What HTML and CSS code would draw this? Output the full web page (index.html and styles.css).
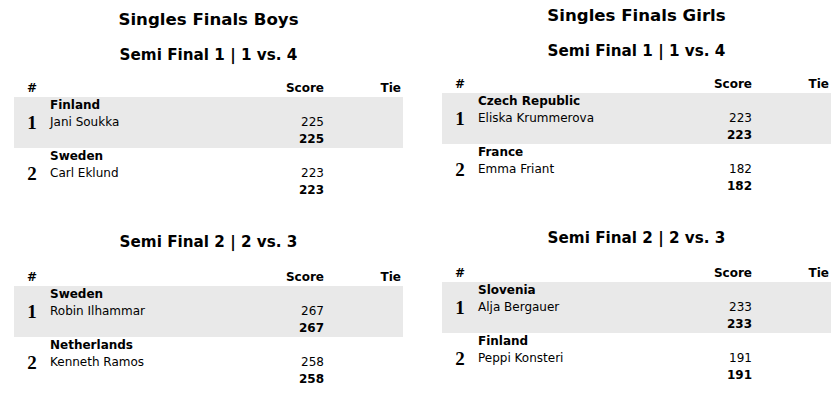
FILE: index.html
```html
<!DOCTYPE html>
<html>
<head>
<meta charset="utf-8">
<link rel="stylesheet" href="styles.css">
</head>
<body>
<div class="page">
  <section class="col col-left">
    <h2 class="title">Singles Finals Boys</h2>
    <h3 class="semi">Semi Final 1 | 1 vs. 4</h3>
    <table class="results">
      <colgroup><col class="c-rank"><col class="c-name"><col class="c-score"><col class="c-tie"></colgroup>
      <thead><tr><th class="rank">#</th><th></th><th class="score">Score</th><th class="tie">Tie</th></tr></thead>
      <tbody>
        <tr class="alt"><td class="rank">1</td><td class="name"><b>Finland</b><br>Jani Soukka<br>&nbsp;</td><td class="score">&nbsp;<br>225<br><b>225</b></td><td class="tie"></td></tr>
        <tr><td class="rank">2</td><td class="name"><b>Sweden</b><br>Carl Eklund<br>&nbsp;</td><td class="score">&nbsp;<br>223<br><b>223</b></td><td class="tie"></td></tr>
      </tbody>
    </table>
    <h3 class="semi semi-2">Semi Final 2 | 2 vs. 3</h3>
    <table class="results">
      <colgroup><col class="c-rank"><col class="c-name"><col class="c-score"><col class="c-tie"></colgroup>
      <thead><tr><th class="rank">#</th><th></th><th class="score">Score</th><th class="tie">Tie</th></tr></thead>
      <tbody>
        <tr class="alt"><td class="rank">1</td><td class="name"><b>Sweden</b><br>Robin Ilhammar<br>&nbsp;</td><td class="score">&nbsp;<br>267<br><b>267</b></td><td class="tie"></td></tr>
        <tr><td class="rank">2</td><td class="name"><b>Netherlands</b><br>Kenneth Ramos<br>&nbsp;</td><td class="score">&nbsp;<br>258<br><b>258</b></td><td class="tie"></td></tr>
      </tbody>
    </table>
  </section>
  <section class="col col-right">
    <h2 class="title">Singles Finals Girls</h2>
    <h3 class="semi">Semi Final 1 | 1 vs. 4</h3>
    <table class="results">
      <colgroup><col class="c-rank"><col class="c-name"><col class="c-score"><col class="c-tie"></colgroup>
      <thead><tr><th class="rank">#</th><th></th><th class="score">Score</th><th class="tie">Tie</th></tr></thead>
      <tbody>
        <tr class="alt"><td class="rank">1</td><td class="name"><b>Czech Republic</b><br>Eliska Krummerova<br>&nbsp;</td><td class="score">&nbsp;<br>223<br><b>223</b></td><td class="tie"></td></tr>
        <tr><td class="rank">2</td><td class="name"><b>France</b><br>Emma Friant<br>&nbsp;</td><td class="score">&nbsp;<br>182<br><b>182</b></td><td class="tie"></td></tr>
      </tbody>
    </table>
    <h3 class="semi semi-2">Semi Final 2 | 2 vs. 3</h3>
    <table class="results">
      <colgroup><col class="c-rank"><col class="c-name"><col class="c-score"><col class="c-tie"></colgroup>
      <thead><tr><th class="rank">#</th><th></th><th class="score">Score</th><th class="tie">Tie</th></tr></thead>
      <tbody>
        <tr class="alt"><td class="rank">1</td><td class="name"><b>Slovenia</b><br>Alja Bergauer<br>&nbsp;</td><td class="score">&nbsp;<br>233<br><b>233</b></td><td class="tie"></td></tr>
        <tr><td class="rank">2</td><td class="name"><b>Finland</b><br>Peppi Konsteri<br>&nbsp;</td><td class="score">&nbsp;<br>191<br><b>191</b></td><td class="tie"></td></tr>
      </tbody>
    </table>
  </section>
</div>
</body>
</html>
```

FILE: styles.css
```css
html, body {
  margin: 0;
  padding: 0;
  background: #fff;
}
body {
  font-family: "DejaVu Sans", Verdana, sans-serif;
  font-size: 12px;
  color: #000;
}
.page {
  display: flex;
  align-items: flex-start;
  padding-left: 14px;
  gap: 39px;
}
.col {
  width: 389px;
  flex: none;
}
.col-left { padding-top: 10px; }
.col-right { padding-top: 6px; }
.title {
  margin: 0 0 15px;
  font-size: 16.6px;
  line-height: 20px;
  text-align: center;
  font-weight: bold;
}
.semi {
  margin: 0 0 15px;
  font-size: 15.2px;
  line-height: 20px;
  text-align: center;
  font-weight: bold;
}
.semi-2 { margin-top: 33px; margin-bottom: 17px; }
.results {
  width: 389px;
  border-collapse: collapse;
  table-layout: fixed;
}
.c-rank { width: 36px; }
.c-name { width: 222px; }
.c-score { width: 54px; }
.c-tie { width: 77px; }
.results th {
  height: 17px;
  padding: 0;
  font-size: 12px;
  line-height: 17px;
  font-weight: bold;
  vertical-align: bottom;
}
.results td {
  padding: 0;
  line-height: 17px;
  vertical-align: middle;
}
.results tr.alt td { background: #e9e9e9; }
.rank { text-align: center; }
td.rank {
  font-family: "Liberation Serif", "Times New Roman", serif;
  font-weight: bold;
  font-size: 19px;
}
.name { text-align: left; }
.score { text-align: right; padding-right: 2px !important; }
.tie { text-align: right; padding-right: 2px !important; }
```
